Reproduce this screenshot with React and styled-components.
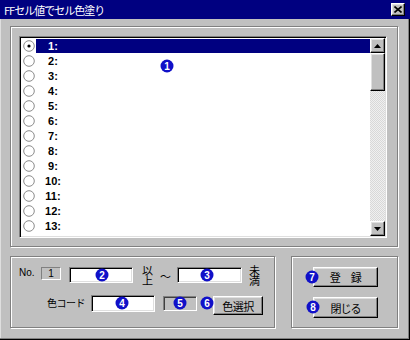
import React from 'react';
import styled, { createGlobalStyle, css } from 'styled-components';

const GlobalStyle = createGlobalStyle`
  html, body { margin: 0; padding: 0; background: #c0c0c0; }
  body { font-family: "Noto Sans CJK JP", "Liberation Sans", sans-serif; }
`;

const raised = css`
  box-sizing: border-box;
  background: #c0c0c0;
  border: 1px solid;
  border-color: #ffffff #000000 #000000 #ffffff;
  box-shadow: inset -1px -1px #808080, inset 1px 1px #dfdfdf;
`;

const sunken = css`
  box-sizing: border-box;
  border: 1px solid;
  border-color: #808080 #ffffff #ffffff #808080;
  box-shadow: inset 1px 1px #000000, inset -1px -1px #dfdfdf;
`;

const Window = styled.div`
  width: 410px;
  height: 340px;
  box-sizing: border-box;
  background: #c0c0c0;
  display: flex;
  flex-direction: column;
  overflow: hidden;
  box-shadow: inset -1px -1px #000000, inset -2px -2px #808080, inset 1px 0 #dfdfdf;
`;

const TitleBar = styled.div`
  flex: none;
  height: 19px;
  background: #000080;
  color: #ffffff;
  display: flex;
  align-items: center;
  justify-content: space-between;
  padding: 0 5px 0 4px;
  font-size: 11px;
  letter-spacing: -1px;
  white-space: nowrap;
`;

const CloseButton = styled.div`
  ${raised};
  width: 14px;
  height: 13px;
  display: flex;
  align-items: center;
  justify-content: center;
`;

const Body = styled.div`
  flex: 1;
  display: flex;
  flex-direction: column;
  gap: 9px;
  padding: 7px 12px 0 10px;
`;

const Frame = styled.div`
  box-sizing: border-box;
  position: relative;
  border: 1px solid #808080;
  box-shadow: inset 1px 1px #ffffff, 1px 1px #ffffff;
`;

const TopFrame = styled(Frame)`
  height: 221px;
  padding: 9px 10px 8px 8px;
`;

const ListBox = styled.div`
  ${sunken};
  height: 202px;
  padding: 1px;
  background: #ffffff;
  display: flex;
`;

const Items = styled.div`
  flex: 1;
  position: relative;
  overflow: hidden;
`;

const Row = styled.div`
  height: 15px;
  display: flex;
  align-items: center;
`;

const Radio = styled.svg`
  flex: none;
  width: 12px;
  height: 12px;
  margin-left: 2px;
`;

const RowBody = styled.div`
  flex: 1;
  height: 14px;
  margin-left: 1px;
  display: flex;
  align-items: center;
  background: ${p => (p.$selected ? '#000080' : 'transparent')};
  color: ${p => (p.$selected ? '#ffffff' : '#000000')};
`;

const Num = styled.span`
  width: 34px;
  text-align: center;
  font-family: "Liberation Sans", Arial, sans-serif;
  font-weight: bold;
  font-size: 11px;
`;

const ScrollBar = styled.div`
  flex: none;
  width: 15px;
  display: flex;
  flex-direction: column;
`;

const ScrollBtn = styled.div`
  ${raised};
  flex: none;
  width: 15px;
  height: 15px;
  display: flex;
  align-items: center;
  justify-content: center;
`;

const Thumb = styled.div`
  ${raised};
  flex: none;
  height: 38px;
`;

const Track = styled.div`
  flex: 1;
  background: repeating-conic-gradient(#d8d8d8 0% 25%, #f0f0f0 0% 50%) 0 0 / 2px 2px;
`;

const BottomRow = styled.div`
  display: flex;
  gap: 16px;
  height: 72px;
`;

const LeftFrame = styled(Frame)`
  width: 265px;
  padding: 8px 0 0 8px;
`;

const RightFrame = styled(Frame)`
  width: 107px;
  padding: 10px 0 0 21px;
  display: flex;
  flex-direction: column;
  gap: 10px;
`;

const FieldRow = styled.div`
  display: flex;
  align-items: flex-start;
  height: ${p => p.$h}px;
  margin-top: ${p => p.$mt || 0}px;
`;

const Label = styled.div`
  width: ${p => p.$w}px;
  margin-left: ${p => p.$ml || 0}px;
  margin-top: ${p => p.$mt || 0}px;
  font-size: ${p => p.$fs || 10}px;
  line-height: 12px;
  letter-spacing: ${p => p.$ls || 0}px;
  font-family: ${p => (p.$latin ? '"Liberation Sans", Arial, sans-serif' : '"Noto Sans CJK JP", "Liberation Sans", sans-serif')};
  white-space: nowrap;
  color: #000000;
`;

const VText = styled.div`
  width: 11px;
  margin-left: ${p => p.$ml}px;
  font-size: 11px;
  line-height: 10px;
  word-break: break-all;
  color: #000000;
`;

const Field = styled.div`
  ${sunken};
  position: relative;
  flex: none;
  background: #ffffff;
  width: ${p => p.$w}px;
  height: ${p => p.$h}px;
  margin-left: ${p => p.$ml}px;
  margin-top: ${p => p.$mt || 0}px;
`;

const StaticBox = styled.div`
  flex: none;
  box-sizing: border-box;
  width: 20px;
  height: 13px;
  margin-top: 2px;
  border: 1px solid;
  border-color: #808080 #ffffff #ffffff #808080;
  font-family: "Liberation Sans", Arial, sans-serif;
  font-size: 10px;
  line-height: 11px;
  text-align: center;
  color: #000000;
`;

const GrayField = styled(Field)`
  background: #c0c0c0;
  box-shadow: inset 1px 1px #404040;
`;

const Button = styled.div`
  ${raised};
  position: relative;
  flex: none;
  width: ${p => p.$w}px;
  height: ${p => p.$h}px;
  margin-left: ${p => p.$ml || 0}px;
  margin-top: ${p => p.$mt || 0}px;
  display: flex;
  align-items: center;
  justify-content: center;
  font-size: 11px;
  letter-spacing: ${p => p.$ls || 0}px;
  color: #000000;
  white-space: pre;
`;

const Badge = styled.span`
  position: absolute;
  left: ${p => p.$x}px;
  top: ${p => p.$y}px;
  transform: translate(-50%, -50%);
  width: 13px;
  height: 13px;
  border-radius: 50%;
  background: #1010c8;
  color: #ffffff;
  font-family: "Liberation Sans", Arial, sans-serif;
  font-weight: bold;
  font-size: 10px;
  line-height: 13px;
  text-align: center;
  letter-spacing: 0;
  z-index: 1;
`;

const RadioIcon = ({ checked }) => (
  <Radio viewBox="0 0 12 12">
    <circle cx="6" cy="6" r="5.3" fill="#ffffff" stroke="#8c8c8c" strokeWidth="1" />
    {checked && <circle cx="6" cy="6" r="1.6" fill="#000000" />}
  </Radio>
);

const Arrow = ({ down }) => (
  <svg width="7" height="4" viewBox="0 0 7 4">
    <polygon points={down ? '0,0 7,0 3.5,4' : '0,4 7,4 3.5,0'} fill="#000000" />
  </svg>
);

const rows = Array.from({ length: 13 }, (_, i) => i + 1);

export default function App() {
  return (
    <>
      <GlobalStyle />
      <Window>
        <TitleBar>
          <span>FFセル値でセル色塗り</span>
          <CloseButton>
            <svg width="8" height="7" viewBox="0 0 8 7">
              <path d="M0.5 0.5 L7.5 6.5 M7.5 0.5 L0.5 6.5" stroke="#000" strokeWidth="1.6" />
            </svg>
          </CloseButton>
        </TitleBar>
        <Body>
          <TopFrame>
            <ListBox>
              <Items>
                {rows.map(n => (
                  <Row key={n}>
                    <RadioIcon checked={n === 1} />
                    <RowBody $selected={n === 1}>
                      <Num>{n}:</Num>
                    </RowBody>
                  </Row>
                ))}
                <Badge $x={146} $y={28}>1</Badge>
              </Items>
              <ScrollBar>
                <ScrollBtn><Arrow /></ScrollBtn>
                <Thumb />
                <Track />
                <ScrollBtn><Arrow down /></ScrollBtn>
              </ScrollBar>
            </ListBox>
          </TopFrame>
          <BottomRow>
            <LeftFrame>
              <FieldRow $h={22}>
                <Label $w={22} $mt={2} $latin>No.</Label>
                <StaticBox>1</StaticBox>
                <Field $w={64} $h={16} $ml={8} $mt={2}>
                  <Badge $x={32} $y={7}>2</Badge>
                </Field>
                <VText $ml={9}>以上</VText>
                <Label $w={9} $ml={7} $mt={5} $fs={11}>～</Label>
                <Field $w={65} $h={16} $ml={8} $mt={2}>
                  <Badge $x={29} $y={7}>3</Badge>
                </Field>
                <VText $ml={7}>未満</VText>
              </FieldRow>
              <FieldRow $h={20} $mt={8}>
                <Label $w={36} $ml={28} $mt={2} $ls={-0.5}>色コード</Label>
                <Field $w={64} $h={17} $ml={8}>
                  <Badge $x={30} $y={7}>4</Badge>
                </Field>
                <GrayField $w={34} $h={15} $ml={8} $mt={1}>
                  <Badge $x={16} $y={6}>5</Badge>
                </GrayField>
                <Button $w={50} $h={19} $ml={16} $mt={1} $ls={-0.5}>
                  <Badge $x={-7} $y={6}>6</Badge>
                  色選択
                </Button>
              </FieldRow>
            </LeftFrame>
            <RightFrame>
              <Button $w={65} $h={20} $ls={-0.5}>
                <Badge $x={-2} $y={9}>7</Badge>
                {'登　録'}
              </Button>
              <Button $w={65} $h={21} $ls={-1}>
                <Badge $x={-1} $y={9}>8</Badge>
                閉じる
              </Button>
            </RightFrame>
          </BottomRow>
        </Body>
      </Window>
    </>
  );
}
